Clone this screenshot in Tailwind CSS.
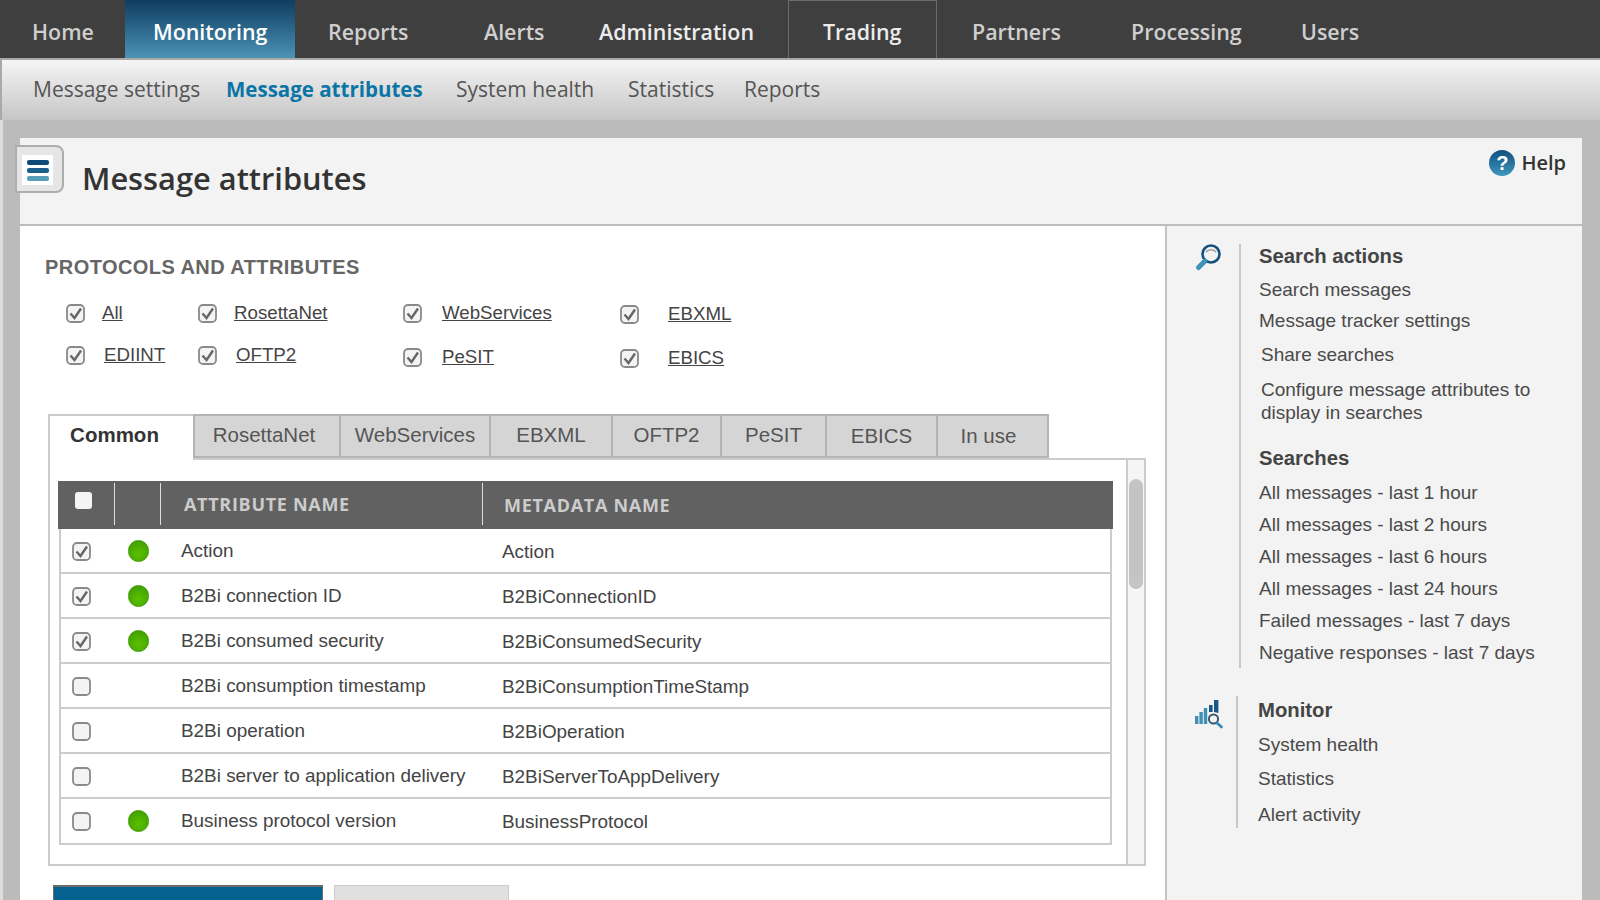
<!DOCTYPE html>
<html lang="en">
<head>
  <meta charset="UTF-8" />
  <title>Message attributes</title>
  <script src="https://cdn.jsdelivr.net/npm/@tailwindcss/browser@4"></script>
</head>
<body class="m-0 bg-[#bbbbbb]">
<div class="w-[1600px] h-[900px] overflow-hidden bg-[#bbbbbb] font-['Liberation_Sans',Arial,sans-serif] text-[#444]">

  <!-- top nav -->
  <nav class="flex h-[58px] bg-[#3f3f3f] font-['Open_Sans',sans-serif] font-semibold text-[21.4px] text-[#cfcfcf] leading-[63px]">
    <a class="block w-[125px] pl-[32px]">Home</a>
    <a class="block w-[170px] pl-[28px] text-white bg-gradient-to-b from-[#0f3d60] to-[#4b94b6]">Monitoring</a>
    <a class="block w-[189px] pl-[33px]">Reports</a>
    <a class="block w-[115px]">Alerts</a>
    <a class="block w-[189px] text-[#ececec]">Administration</a>
    <a class="block w-[149px] pl-[34px] text-[#ececec] border border-b-0 border-[#6c6c6c] leading-[61px]">Trading</a>
    <a class="block w-[194px] pl-[35px]">Partners</a>
    <a class="block w-[170px]">Processing</a>
    <a class="block">Users</a>
  </nav>

  <!-- sub nav -->
  <div class="flex h-[62px] border-t-2 border-[#a9a9a9] border-l-2 bg-gradient-to-b from-[#f5f5f5] to-[#c6c6c6] font-['Open_Sans',sans-serif] text-[21px] text-[#555] leading-[58px]">
    <a class="block w-[193px] pl-[31px] box-content">Message settings</a>
    <a class="block w-[230px] font-bold text-[20.5px] text-[#0b75a6]">Message attributes</a>
    <a class="block w-[172px]">System health</a>
    <a class="block w-[116px]">Statistics</a>
    <a class="block">Reports</a>
  </div>

  <!-- page -->
  <div class="pt-[18px] pl-[20px] pr-[18px] relative">
    <div class="absolute left-0 top-0 bottom-0 w-[3px] bg-[#dcdcdc]"></div>

    <header class="relative h-[88px] bg-[#f3f3f3] border-b-2 border-[#bdbdbd] flex justify-between">
      <button class="absolute left-[-5px] top-[7px] w-[49px] h-[48px] bg-[#e6e6e6] border-2 border-[#adadad] rounded-r-[8px] flex items-center justify-start pl-[5px] pt-[2px]">
        <span class="w-[31px] h-[30px] bg-white flex flex-col items-center justify-center gap-[3px]">
          <i class="block w-[22px] h-[5px] rounded-[2px] bg-[#0f4a78]"></i>
          <i class="block w-[22px] h-[5px] rounded-[2px] bg-[#1c5f8c]"></i>
          <i class="block w-[22px] h-[5px] rounded-[2px] bg-[#5a9dbb]"></i>
        </span>
      </button>
      <h1 class="ml-[62px] mt-[18px] font-['Open_Sans',sans-serif] font-semibold text-[30.8px] leading-[44px] text-[#333]">Message attributes</h1>
      <div class="flex items-start gap-[6px] mr-[16px] mt-[12px]">
        <span class="w-[26px] h-[26px] rounded-full bg-gradient-to-b from-[#0f4f80] to-[#3f97bd] text-white font-bold text-[20px] leading-[26px] text-center">?</span>
        <span class="font-['Open_Sans',sans-serif] font-semibold text-[20px] leading-[26px] text-[#333]">Help</span>
      </div>
    </header>

    <div class="flex h-[700px]">
      <!-- main column -->
      <main class="w-[1145px] bg-white pl-[25px] pt-[29px]">
        <h2 class="font-bold text-[20px] leading-[24px] tracking-[0.43px] text-[#666]">PROTOCOLS AND ATTRIBUTES</h2>

        <div class="mt-[22px] ml-[21px] grid grid-cols-[132px_205px_217px_auto] grid-rows-[42px_42px] text-[18.7px] leading-[24px] text-[#444] underline">
          <label class="flex items-center gap-[17px] h-[24px]"><svg class="w-[19px] h-[19px] shrink-0" viewBox="0 0 19 19"><rect x="1" y="1" width="17" height="17" rx="4" fill="#f4f4f4" stroke="#8a8a8a" stroke-width="1.8"/><path d="M4.5 9.5 8.5 14 15 4.5" fill="none" stroke="#666" stroke-width="2.4"/></svg>All</label>
          <label class="flex items-center gap-[17px] h-[24px]"><svg class="w-[19px] h-[19px] shrink-0" viewBox="0 0 19 19"><rect x="1" y="1" width="17" height="17" rx="4" fill="#f4f4f4" stroke="#8a8a8a" stroke-width="1.8"/><path d="M4.5 9.5 8.5 14 15 4.5" fill="none" stroke="#666" stroke-width="2.4"/></svg>RosettaNet</label>
          <label class="flex items-center gap-[20px] h-[24px]"><svg class="w-[19px] h-[19px] shrink-0" viewBox="0 0 19 19"><rect x="1" y="1" width="17" height="17" rx="4" fill="#f4f4f4" stroke="#8a8a8a" stroke-width="1.8"/><path d="M4.5 9.5 8.5 14 15 4.5" fill="none" stroke="#666" stroke-width="2.4"/></svg>WebServices</label>
          <label class="flex items-center gap-[29px] h-[24px] mt-[1px]"><svg class="w-[19px] h-[19px] shrink-0" viewBox="0 0 19 19"><rect x="1" y="1" width="17" height="17" rx="4" fill="#f4f4f4" stroke="#8a8a8a" stroke-width="1.8"/><path d="M4.5 9.5 8.5 14 15 4.5" fill="none" stroke="#666" stroke-width="2.4"/></svg>EBXML</label>
          <label class="flex items-center gap-[19px] h-[24px]"><svg class="w-[19px] h-[19px] shrink-0" viewBox="0 0 19 19"><rect x="1" y="1" width="17" height="17" rx="4" fill="#f4f4f4" stroke="#8a8a8a" stroke-width="1.8"/><path d="M4.5 9.5 8.5 14 15 4.5" fill="none" stroke="#666" stroke-width="2.4"/></svg>EDIINT</label>
          <label class="flex items-center gap-[19px] h-[24px]"><svg class="w-[19px] h-[19px] shrink-0" viewBox="0 0 19 19"><rect x="1" y="1" width="17" height="17" rx="4" fill="#f4f4f4" stroke="#8a8a8a" stroke-width="1.8"/><path d="M4.5 9.5 8.5 14 15 4.5" fill="none" stroke="#666" stroke-width="2.4"/></svg>OFTP2</label>
          <label class="flex items-center gap-[20px] h-[24px] mt-[2px]"><svg class="w-[19px] h-[19px] shrink-0" viewBox="0 0 19 19"><rect x="1" y="1" width="17" height="17" rx="4" fill="#f4f4f4" stroke="#8a8a8a" stroke-width="1.8"/><path d="M4.5 9.5 8.5 14 15 4.5" fill="none" stroke="#666" stroke-width="2.4"/></svg>PeSIT</label>
          <label class="flex items-center gap-[29px] h-[24px] mt-[3px]"><svg class="w-[19px] h-[19px] shrink-0" viewBox="0 0 19 19"><rect x="1" y="1" width="17" height="17" rx="4" fill="#f4f4f4" stroke="#8a8a8a" stroke-width="1.8"/><path d="M4.5 9.5 8.5 14 15 4.5" fill="none" stroke="#666" stroke-width="2.4"/></svg>EBICS</label>
        </div>

        <!-- tabs -->
        <div class="ml-[3px] mt-[29px] flex h-[44px] text-[20.5px] leading-[38px] text-[#555] text-center">
          <div class="w-[145px] pr-[14px] bg-white border-t-2 border-l-2 border-[#cccccc] font-bold text-[#333] -mb-[2px] relative z-10">Common</div>
          <div class="w-[148px] pr-[6px] bg-[#d5d5d5] border-2 border-[#b4b4b4]">RosettaNet</div>
          <div class="w-[150px] bg-[#d5d5d5] border-y-2 border-r-2 border-[#b4b4b4]">WebServices</div>
          <div class="w-[122px] bg-[#d5d5d5] border-y-2 border-r-2 border-[#b4b4b4]">EBXML</div>
          <div class="w-[109px] bg-[#d5d5d5] border-y-2 border-r-2 border-[#b4b4b4]">OFTP2</div>
          <div class="w-[105px] bg-[#d5d5d5] border-y-2 border-r-2 border-[#b4b4b4]">PeSIT</div>
          <div class="w-[111px] bg-[#d5d5d5] border-y-2 border-r-2 border-[#b4b4b4] leading-[40px]">EBICS</div>
          <div class="w-[111px] pr-[8px] bg-[#d5d5d5] border-y-2 border-r-2 border-[#b4b4b4] leading-[40px]">In use</div>
        </div>

        <!-- table box -->
        <div class="ml-[3px] w-[1098px] h-[408px] border-2 border-[#cccccc] flex">
          <div class="w-[1078px] pl-[8px] pt-[21px]">
            <div class="flex h-[48px] w-[1055px] bg-[#616161] font-['Open_Sans',sans-serif] font-bold text-[18px] tracking-[0.7px] text-[#cccccc] leading-[48px]">
              <div class="w-[57px] h-[42px] mt-[2px] border-r border-[#dddddd] pl-[17px] pt-[9px]"><span class="block w-[17px] h-[17px] rounded-[3px] bg-[#f4f4f4]"></span></div>
              <div class="w-[46px] h-[42px] mt-[2px] border-r border-[#dddddd]"></div>
              <div class="w-[322px] h-[42px] mt-[2px] border-r border-[#dddddd] pl-[23px] leading-[42px]">ATTRIBUTE NAME</div>
              <div class="pl-[21px] leading-[48px]">METADATA NAME</div>
            </div>

            <div class="ml-[1px] w-[1053px] border-x-2 border-b-2 border-[#cccccc] text-[18.9px] text-[#444]">
              <div class="flex items-center h-[45px] pt-[2px] border-b-2 border-[#cccccc]"><svg class="ml-[11px] w-[19px] h-[19px]" viewBox="0 0 19 19"><rect x="1" y="1" width="17" height="17" rx="4" fill="#f4f4f4" stroke="#8a8a8a" stroke-width="1.8"/><path d="M4.5 9.5 8.5 14 15 4.5" fill="none" stroke="#666" stroke-width="2.4"/></svg><span class="ml-[37px] -mt-[2px] w-[21px] h-[22px] rounded-full bg-[radial-gradient(circle_at_50%_65%,#5cc000,#3b9a00)] border border-[#3d9a00]"></span><span class="ml-[32px] w-[321px]">Action</span><span class="pt-[2px]">Action</span></div>
              <div class="flex items-center h-[45px] pt-[2px] border-b-2 border-[#cccccc]"><svg class="ml-[11px] w-[19px] h-[19px]" viewBox="0 0 19 19"><rect x="1" y="1" width="17" height="17" rx="4" fill="#f4f4f4" stroke="#8a8a8a" stroke-width="1.8"/><path d="M4.5 9.5 8.5 14 15 4.5" fill="none" stroke="#666" stroke-width="2.4"/></svg><span class="ml-[37px] -mt-[2px] w-[21px] h-[22px] rounded-full bg-[radial-gradient(circle_at_50%_65%,#5cc000,#3b9a00)] border border-[#3d9a00]"></span><span class="ml-[32px] w-[321px]">B2Bi connection ID</span><span class="pt-[2px]">B2BiConnectionID</span></div>
              <div class="flex items-center h-[45px] pt-[2px] border-b-2 border-[#cccccc]"><svg class="ml-[11px] w-[19px] h-[19px]" viewBox="0 0 19 19"><rect x="1" y="1" width="17" height="17" rx="4" fill="#f4f4f4" stroke="#8a8a8a" stroke-width="1.8"/><path d="M4.5 9.5 8.5 14 15 4.5" fill="none" stroke="#666" stroke-width="2.4"/></svg><span class="ml-[37px] -mt-[2px] w-[21px] h-[22px] rounded-full bg-[radial-gradient(circle_at_50%_65%,#5cc000,#3b9a00)] border border-[#3d9a00]"></span><span class="ml-[32px] w-[321px]">B2Bi consumed security</span><span class="pt-[2px]">B2BiConsumedSecurity</span></div>
              <div class="flex items-center h-[45px] pt-[2px] border-b-2 border-[#cccccc]"><svg class="ml-[11px] w-[19px] h-[19px]" viewBox="0 0 19 19"><rect x="1" y="1" width="17" height="17" rx="4" fill="#f4f4f4" stroke="#8a8a8a" stroke-width="1.8"/></svg><span class="ml-[37px] w-[21px] h-[22px]"></span><span class="ml-[32px] w-[321px]">B2Bi consumption timestamp</span><span class="pt-[2px]">B2BiConsumptionTimeStamp</span></div>
              <div class="flex items-center h-[45px] pt-[2px] border-b-2 border-[#cccccc]"><svg class="ml-[11px] w-[19px] h-[19px]" viewBox="0 0 19 19"><rect x="1" y="1" width="17" height="17" rx="4" fill="#f4f4f4" stroke="#8a8a8a" stroke-width="1.8"/></svg><span class="ml-[37px] w-[21px] h-[22px]"></span><span class="ml-[32px] w-[321px]">B2Bi operation</span><span class="pt-[2px]">B2BiOperation</span></div>
              <div class="flex items-center h-[45px] pt-[2px] border-b-2 border-[#cccccc]"><svg class="ml-[11px] w-[19px] h-[19px]" viewBox="0 0 19 19"><rect x="1" y="1" width="17" height="17" rx="4" fill="#f4f4f4" stroke="#8a8a8a" stroke-width="1.8"/></svg><span class="ml-[37px] w-[21px] h-[22px]"></span><span class="ml-[32px] w-[321px]">B2Bi server to application delivery</span><span class="pt-[2px]">B2BiServerToAppDelivery</span></div>
              <div class="flex items-center h-[44px]"><svg class="ml-[11px] w-[19px] h-[19px]" viewBox="0 0 19 19"><rect x="1" y="1" width="17" height="17" rx="4" fill="#f4f4f4" stroke="#8a8a8a" stroke-width="1.8"/></svg><span class="ml-[37px] w-[21px] h-[22px] rounded-full bg-[radial-gradient(circle_at_50%_65%,#5cc000,#3b9a00)] border border-[#3d9a00]"></span><span class="ml-[32px] w-[321px]">Business protocol version</span><span class="pt-[2px]">BusinessProtocol</span></div>
            </div>
          </div>
          <!-- scrollbar -->
          <div class="w-[18px] bg-[#f5f5f5] border-l-2 border-[#cccccc] pt-[19px] px-[1px]">
            <div class="h-[110px] rounded-full bg-[#c4c4c4]"></div>
          </div>
        </div>

        <div class="mt-[19px] ml-[8px] flex gap-[11px]">
          <div class="w-[270px] h-[40px] bg-[#05618f] border-t-2 border-x border-[#6b6b6b]"></div>
          <div class="w-[175px] h-[40px] bg-[#e0e0e0] border border-[#cccccc]"></div>
        </div>
      </main>

      <!-- right sidebar -->
      <aside class="flex-1 bg-[#f3f3f3] border-l-2 border-[#c4c4c4] text-[19px] text-[#4a4a4a] pt-[18px]">
        <section class="flex">
          <div class="w-[74px] h-[424px] border-r-2 border-[#c8c8c8] pl-[27px]">
            <svg class="w-[30px] h-[30px] -mt-[2px]" viewBox="0 0 30 30"><circle cx="17" cy="12" r="8.5" fill="#f3f3f3" stroke="#14517f" stroke-width="2.6"/><path d="M11 19 4.5 25.5" stroke="#3f93ba" stroke-width="5" stroke-linecap="round"/><path d="M12 10c2-3 8-3 10 0" fill="none" stroke="#9a9a9a" stroke-width="1.5"/></svg>
          </div>
          <div class="pl-[18px]">
            <h3 class="h-[24px] leading-[24px] font-bold text-[#444] text-[20.3px]">Search actions</h3>
            <p class="mt-[10px] leading-[24px]">Search messages</p>
            <p class="mt-[7px] leading-[24px]">Message tracker settings</p>
            <p class="mt-[10px] ml-[2px] leading-[24px]">Share searches</p>
            <p class="mt-[12px] ml-[2px] leading-[22.5px] w-[290px]">Configure message attributes to display in searches</p>
            <h3 class="mt-[22px] h-[24px] leading-[24px] font-bold text-[#444] text-[20.3px]">Searches</h3>
            <p class="mt-[11px] leading-[24px]">All messages - last 1 hour</p>
            <p class="mt-[8px] leading-[24px]">All messages - last 2 hours</p>
            <p class="mt-[8px] leading-[24px]">All messages - last 6 hours</p>
            <p class="mt-[8px] leading-[24px]">All messages - last 24 hours</p>
            <p class="mt-[8px] leading-[24px]">Failed messages - last 7 days</p>
            <p class="mt-[8px] leading-[24px]">Negative responses - last 7 days</p>
          </div>
        </section>
        <section class="flex mt-[28px]">
          <div class="w-[71px] h-[132px] border-r-2 border-[#c8c8c8] pl-[27px] pt-[3px]">
            <svg class="w-[30px] h-[30px]" viewBox="0 0 30 30"><path d="M1 25V17h3.4v8zM5.4 25V13h3.4v12zM9.8 25V9h3.4v16z" fill="#3f8fb5"/><path d="M15 13V6h3.6v7zM20 13V1h4.4v13z" fill="#17588a"/><circle cx="19.5" cy="20" r="4.6" fill="#f3f3f3" stroke="#3d5a70" stroke-width="2"/><path d="M23 24 27.5 28" stroke="#2f86ae" stroke-width="2.6" stroke-linecap="round"/></svg>
          </div>
          <div class="pl-[20px]">
            <h3 class="h-[24px] leading-[24px] font-bold text-[#444] text-[20.3px] mt-[2px]">Monitor</h3>
            <p class="mt-[11px] leading-[24px]">System health</p>
            <p class="mt-[10px] leading-[24px]">Statistics</p>
            <p class="mt-[12px] leading-[24px]">Alert activity</p>
          </div>
        </section>
      </aside>
    </div>
  </div>
</div>
</body>
</html>
